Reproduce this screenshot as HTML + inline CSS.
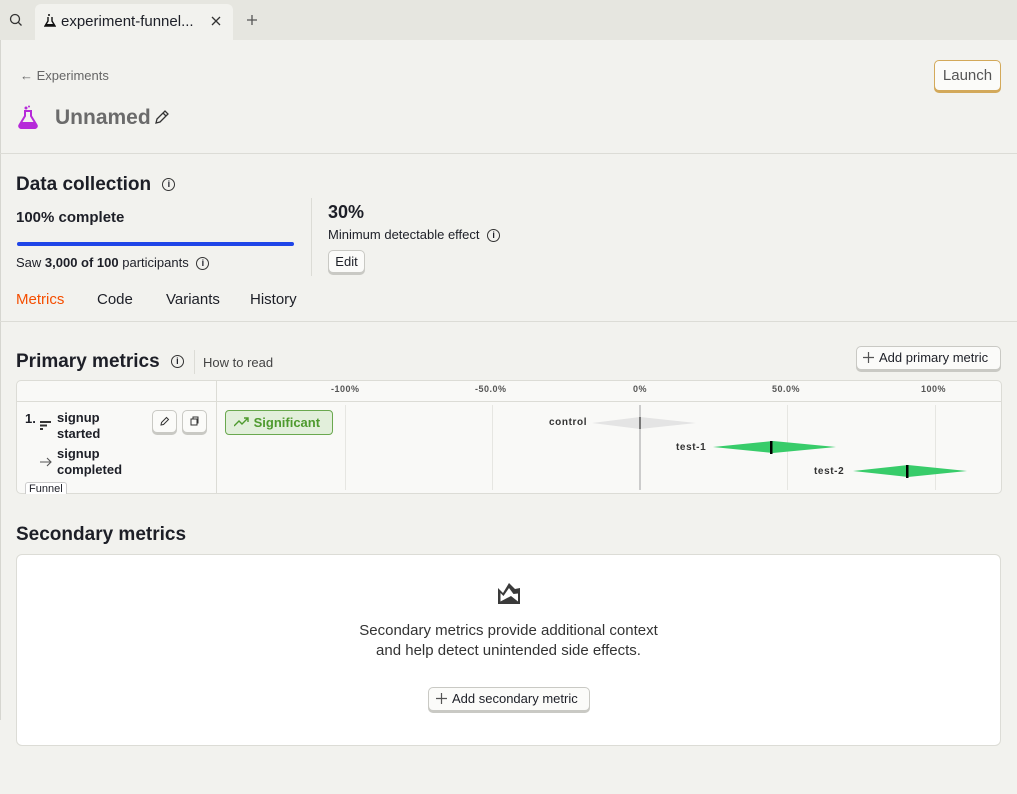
<!DOCTYPE html>
<html><head><meta charset="utf-8"><style>
*{box-sizing:border-box;margin:0;padding:0}
body{width:1017px;height:794px;background:#f2f2ee;font-family:"Liberation Sans",sans-serif;color:#1d1f27;position:relative;overflow:hidden}
.a{position:absolute;white-space:nowrap}
.btn{position:absolute;background:#fbfbf9;border:1px solid #c9c9c4;border-radius:5px;box-shadow:0 2px 0 #c9c9c4;font-size:13px;font-weight:bold;color:#1d1f27}
.info{display:inline-block;width:13px;height:13px;border:1.3px solid #333;border-radius:50%;font-size:9px;text-align:center;line-height:11px;font-weight:bold;vertical-align:middle;margin-left:4px}
.tick{position:absolute;top:384px;font-size:9px;color:#555;letter-spacing:.5px;font-weight:bold}
.vl{position:absolute;top:405px;height:85px;width:1px;background:#e6e6e2}
.lbl{position:absolute;font-size:10px;font-weight:bold;letter-spacing:.6px;color:#333}
.plus{display:inline-block;vertical-align:-1px;margin-right:5px}
</style></head><body>
<div class="a" style="left:0;top:0;width:1017px;height:40px;background:#e6e6e0"></div>
<svg class="a" style="left:9px;top:13px" width="14" height="14" viewBox="0 0 14 14"><circle cx="6" cy="6" r="4.5" fill="none" stroke="#333" stroke-width="1.3"/><line x1="9.3" y1="9.3" x2="12.5" y2="12.5" stroke="#333" stroke-width="1.3"/></svg>
<div class="a" style="left:35px;top:4px;width:198px;height:40px;background:#f2f2ee;border-radius:6px 6px 0 0"></div>
<svg class="a" style="left:44px;top:14px" width="12" height="14" viewBox="0 0 12 14"><path d="M4 3v4L1 12h10L8 7V3" fill="none" stroke="#111" stroke-width="1.4"/><path d="M2 10h8l1 2H1z" fill="#111"/><circle cx="5" cy="1" r="1" fill="#111"/></svg>
<div class="a" style="left:61px;top:13px;font-size:15px;color:#1d1f27">experiment-funnel...</div>
<svg class="a" style="left:211px;top:16px" width="10" height="10"><path d="M1 1l8 8M9 1l-8 8" stroke="#333" stroke-width="1.3"/></svg>
<svg class="a" style="left:246px;top:14px" width="12" height="12"><path d="M6 1v10M1 6h10" stroke="#555" stroke-width="1.3"/></svg>
<div class="a" style="left:0;top:40px;width:1px;height:680px;background:#d6d6d0"></div>
<div class="a" style="left:20px;top:68px;font-size:13px;color:#666">← Experiments</div>
<div class="btn" style="left:934px;top:60px;width:67px;height:31px;border-color:#d3a95a;box-shadow:0 2px 0 #d3a95a;font-weight:normal;font-size:15px;color:#555;text-align:center;line-height:30px">Launch</div>
<svg class="a" style="left:18px;top:105px" width="20" height="24" viewBox="0 0 20 24"><circle cx="8" cy="3" r="1.5" fill="#b62ad9"/><circle cx="11" cy="1.5" r="1" fill="#b62ad9"/><path d="M6 6h8M7 6v5L1.5 20a2 2 0 0 0 2 3h13a2 2 0 0 0 2-3L13 11V6" fill="none" stroke="#b62ad9" stroke-width="2"/><path d="M3 17h14l1.5 3.5a1.5 1.5 0 0 1-1.5 2H3a1.5 1.5 0 0 1-1.5-2z" fill="#b62ad9"/></svg>
<div class="a" style="left:55px;top:106px;font-size:21px;font-weight:bold;color:#6b6b6b">Unnamed</div>
<svg class="a" style="left:154px;top:109px" width="16" height="16" viewBox="0 0 16 16"><path d="M2 14l1-4 8-8 3 3-8 8z M9 4l3 3" fill="none" stroke="#333" stroke-width="1.3"/></svg>
<div class="a" style="left:0;top:153px;width:1017px;height:1px;background:#dcdcd6"></div>
<div class="a" style="left:16px;top:174px;font-size:19px;font-weight:bold">Data collection <span class="info" style="margin-left:6px">i</span></div>
<div class="a" style="left:16px;top:209px;font-size:15px;font-weight:bold">100% complete</div>
<div class="a" style="left:17px;top:242px;width:277px;height:4px;border-radius:2px;background:#1f45e8"></div>
<div class="a" style="left:16px;top:255px;font-size:13px">Saw <b>3,000 of 100</b> participants <span class="info">i</span></div>
<div class="a" style="left:311px;top:198px;width:1px;height:78px;background:#dcdcd6"></div>
<div class="a" style="left:328px;top:202px;font-size:18px;font-weight:bold">30%</div>
<div class="a" style="left:328px;top:227px;font-size:13px">Minimum detectable effect <span class="info">i</span></div>
<div class="btn" style="left:328px;top:250px;width:37px;height:23px;font-weight:normal;text-align:center;line-height:21px">Edit</div>
<div class="a" style="left:16px;top:291px;font-size:15px;color:#f54e00">Metrics</div>
<div class="a" style="left:97px;top:291px;font-size:15px">Code</div>
<div class="a" style="left:166px;top:291px;font-size:15px">Variants</div>
<div class="a" style="left:250px;top:291px;font-size:15px">History</div>
<div class="a" style="left:0;top:321px;width:1017px;height:1px;background:#dcdcd6"></div>
<div class="a" style="left:16px;top:351px;font-size:19px;font-weight:bold">Primary metrics <span class="info" style="margin-left:6px">i</span></div>
<div class="a" style="left:194px;top:350px;width:1px;height:24px;background:#dcdcd6"></div>
<div class="a" style="left:203px;top:355px;font-size:13px;color:#444">How to read</div>
<div class="btn" style="left:856px;top:346px;width:145px;height:24px;font-weight:normal;line-height:22px;padding-left:6px"><svg class="plus" width="11" height="11"><path d="M5.5 0v11M0 5.5h11" stroke="#555" stroke-width="1.2"/></svg>Add primary metric</div>
<div class="a" style="left:16px;top:380px;width:986px;height:114px;background:#f9f9f7;border:1px solid #dcdcd6;border-radius:5px"></div>
<div class="a" style="left:17px;top:401px;width:984px;height:1px;background:#dcdcd6"></div>
<div class="a" style="left:216px;top:381px;width:1px;height:112px;background:#dcdcd6"></div>
<div class="tick" style="left:331px">-100%</div><div class="tick" style="left:475px">-50.0%</div><div class="tick" style="left:633px">0%</div><div class="tick" style="left:772px">50.0%</div><div class="tick" style="left:921px">100%</div>
<div class="vl" style="left:345px"></div><div class="vl" style="left:492px"></div><div class="vl" style="left:787px"></div><div class="vl" style="left:935px"></div>
<div class="a" style="left:639px;top:405px;width:2px;height:85px;background:#ccc"></div>
<div class="a" style="left:25px;top:411px;font-size:13px;font-weight:bold">1.</div>
<svg class="a" style="left:40px;top:421px" width="12" height="10" viewBox="0 0 12 10"><rect x="0" y="0" width="11" height="2" fill="#333"/><rect x="0" y="3.5" width="7" height="2" fill="#333"/><rect x="0" y="7" width="3" height="2" fill="#333"/></svg>
<div class="a" style="left:57px;top:410px;font-size:13px;font-weight:bold;line-height:16px">signup<br>started</div>
<svg class="a" style="left:39px;top:457px" width="13" height="10"><path d="M1 5h11M8 1l4 4-4 4" fill="none" stroke="#555" stroke-width="1.1"/></svg>
<div class="a" style="left:57px;top:446px;font-size:13px;font-weight:bold;line-height:16px">signup<br>completed</div>
<div class="a" style="left:25px;top:482px;font-size:11px;border:1px solid #ccc;border-bottom:none;border-radius:3px 3px 0 0;padding:0 3px;background:#fff;height:12px;line-height:13px">Funnel</div>
<div class="btn" style="left:152px;top:410px;width:25px;height:23px"><svg width="23" height="21" viewBox="0 0 23 21"><path d="M8 14l.5-2.5 5-5 2 2-5 5z" fill="none" stroke="#333" stroke-width="1"/></svg></div>
<div class="btn" style="left:182px;top:410px;width:25px;height:23px"><svg width="23" height="21" viewBox="0 0 23 21"><rect x="8" y="8" width="6" height="6" fill="none" stroke="#333"/><path d="M10 8V6h5v6h-1" fill="none" stroke="#333"/></svg></div>
<div class="a" style="left:225px;top:410px;width:108px;height:25px;background:#e2efdb;border:1px solid #6aa84f;border-radius:4px;color:#4e9a2e;font-size:13px;font-weight:bold;line-height:23px;padding-left:8px"><svg width="16" height="10" viewBox="0 0 16 10" style="vertical-align:0"><path d="M0 9l5-5 3 3 6-6M10 1h4v4" fill="none" stroke="#4e9a2e" stroke-width="1.4"/></svg> Significant</div>
<div class="lbl" style="left:549px;top:417px">control</div>
<svg class="a" style="left:592px;top:416px" width="104" height="14"><polygon points="0,7 48,1 104,7 48,13" fill="#e4e4e4"/><rect x="47" y="1" width="2" height="12" fill="#777"/></svg>
<div class="lbl" style="left:676px;top:442px">test-1</div>
<svg class="a" style="left:713px;top:440px" width="124" height="14"><polygon points="0,7 60,1 123,7 60,13" fill="#38cc6a"/><rect x="57" y="1" width="2.5" height="13" fill="#000"/></svg>
<div class="lbl" style="left:814px;top:466px">test-2</div>
<svg class="a" style="left:853px;top:464px" width="115" height="14"><polygon points="0,7 55,1 114,7 55,13" fill="#38cc6a"/><rect x="53" y="1" width="2.5" height="13" fill="#000"/></svg>
<div class="a" style="left:16px;top:524px;font-size:19px;font-weight:bold">Secondary metrics</div>
<div class="a" style="left:16px;top:554px;width:985px;height:192px;background:#fff;border:1px solid #dcdcd6;border-radius:6px"></div>
<svg class="a" style="left:497px;top:582px" width="24" height="23" viewBox="0 0 24 23"><path d="M1 22V6l5 5 6-10 6 6 5-1v16z" fill="#3a3a3a"/><path d="M3.5 19.5V11l3 3 5.5-8 4.5 6 4.5-.5V19.5L14 14z" fill="#fff"/></svg>
<div class="a" style="left:0;top:621px;width:1017px;text-align:center;font-size:15px;color:#333;line-height:20px">Secondary metrics provide additional context<br>and help detect unintended side effects.</div>
<div class="btn" style="left:428px;top:687px;width:162px;height:24px;font-weight:normal;line-height:22px;padding-left:7px"><svg class="plus" width="11" height="11"><path d="M5.5 0v11M0 5.5h11" stroke="#555" stroke-width="1.2"/></svg>Add secondary metric</div>
</body></html>
